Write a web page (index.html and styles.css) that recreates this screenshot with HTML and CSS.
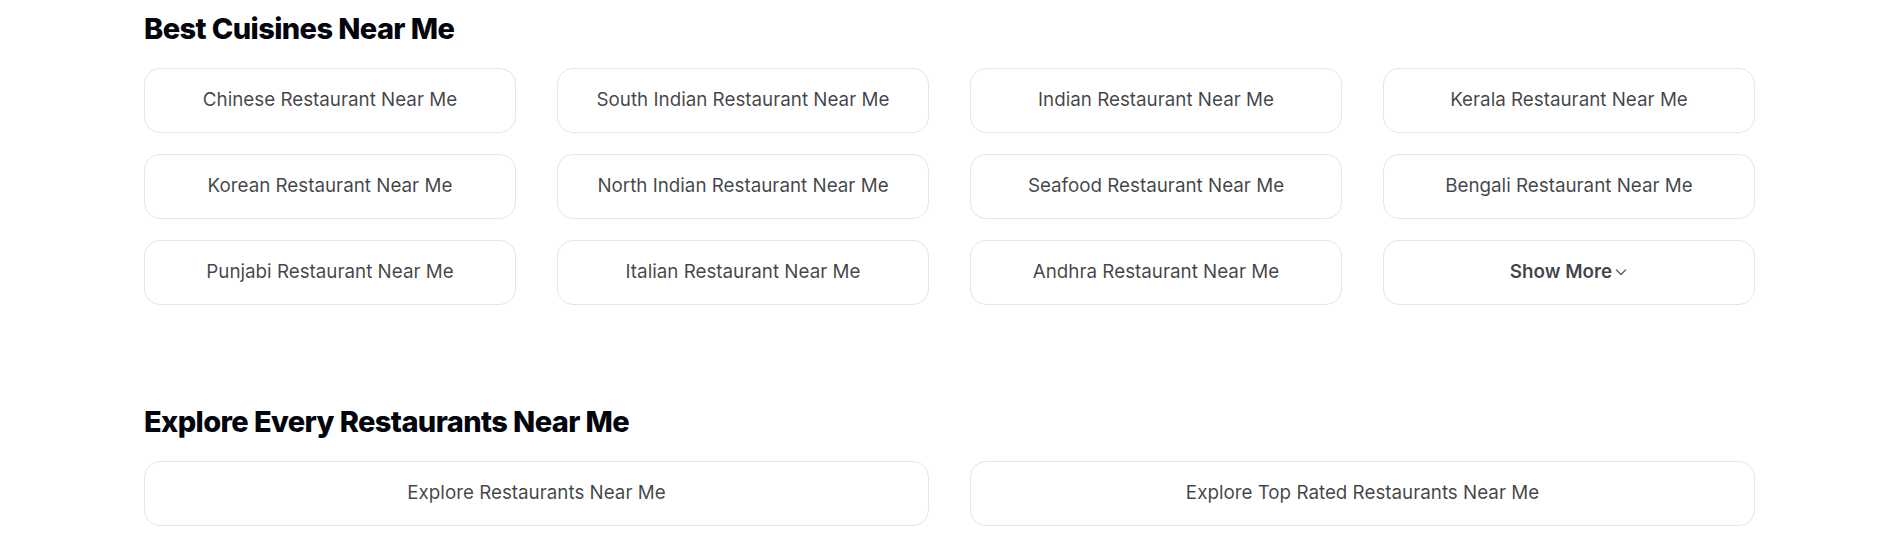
FILE: index.html
```html
<!DOCTYPE html>
<html>
<head>
<meta charset="utf-8">
<link rel="stylesheet" href="styles.css">
</head>
<body>
<div class="page">
  <section class="section">
    <h2 class="title">Best Cuisines Near Me</h2>
    <div class="grid grid-4">
      <a class="card">Chinese Restaurant Near Me</a>
      <a class="card">South Indian Restaurant Near Me</a>
      <a class="card">Indian Restaurant Near Me</a>
      <a class="card">Kerala Restaurant Near Me</a>
      <a class="card">Korean Restaurant Near Me</a>
      <a class="card">North Indian Restaurant Near Me</a>
      <a class="card">Seafood Restaurant Near Me</a>
      <a class="card">Bengali Restaurant Near Me</a>
      <a class="card">Punjabi Restaurant Near Me</a>
      <a class="card">Italian Restaurant Near Me</a>
      <a class="card">Andhra Restaurant Near Me</a>
      <a class="card card-more">Show More<svg class="chev" width="14" height="14" viewBox="0 0 14 14"><path d="M2.5 5 L7 9.5 L11.5 5" fill="none" stroke="#6b6d73" stroke-width="1.6" stroke-linecap="round" stroke-linejoin="round"/></svg></a>
    </div>
  </section>
  <section class="section section-2">
    <h2 class="title">Explore Every Restaurants Near Me</h2>
    <div class="grid grid-2">
      <a class="card">Explore Restaurants Near Me</a>
      <a class="card">Explore Top Rated Restaurants Near Me</a>
    </div>
  </section>
</div>
</body>
</html>
```
FILE: styles.css
```css
html, body {
  margin: 0;
  padding: 0;
  background: #ffffff;
}
body {
  font-family: Inter, "Liberation Sans", sans-serif;
}
.page {
  width: 1611px;
  margin-left: 144px;
}
.section {
  display: flex;
  flex-direction: column;
}
.title {
  margin: 0;
  padding-top: 9px;
  height: 68px;
  box-sizing: border-box;
  font-size: 29px;
  line-height: 40px;
  font-weight: 800;
  color: #02060c;
  letter-spacing: -0.6px;
}
.section-2 {
  margin-top: 88px;
}
.grid {
  display: grid;
  column-gap: 41px;
  row-gap: 21px;
}
.grid-4 {
  grid-template-columns: repeat(4, 1fr);
}
.grid-2 {
  grid-template-columns: repeat(2, 1fr);
}
.card {
  height: 65px;
  box-sizing: border-box;
  border: 1px solid #e5e5e8;
  border-radius: 16px;
  display: flex;
  align-items: center;
  justify-content: center;
  font-size: 18.8px;
  color: rgba(2, 6, 12, 0.75);
  text-decoration: none;
  padding-bottom: 2px;
}
.card-more {
  font-weight: 600;
  gap: 2px;
}
.chev {
  display: block;
  margin-top: 1px;
}
```
